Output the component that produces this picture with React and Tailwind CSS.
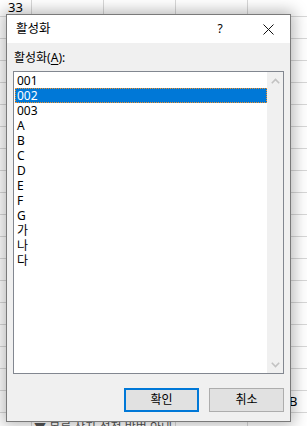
import React from "react";

const items = ["001", "002", "003", "A", "B", "C", "D", "E", "F", "G", "가", "나", "다"];

function Chevron({ up }) {
  return (
    <svg width="9" height="6" viewBox="0 0 9 6">
      <path
        d={up ? "M0.8 5.2 L4.5 1.5 L8.2 5.2" : "M0.8 0.8 L4.5 4.5 L8.2 0.8"}
        fill="none"
        stroke="#c2c2c2"
        strokeWidth="1.6"
      />
    </svg>
  );
}

export default function App() {
  const rows = Array.from({ length: 21 });
  return (
    <div
      className="relative w-[307px] h-[426px] overflow-hidden bg-white text-[12px] text-black"
      style={{ fontFamily: '"Noto Sans", "Noto Sans CJK KR", sans-serif' }}
    >
      {/* spreadsheet background */}
      <div className="-mt-[5px] flex flex-col">
        {rows.map((_, i) => (
          <div key={i} className="flex h-[22px] shrink-0 border-b border-[#d8d8d8]">
            <div className="w-[32px] shrink-0 border-r border-[#d8d8d8] flex items-center justify-center pt-[3px] leading-none text-[13px]">
              {i === 0 ? "33" : ""}
            </div>
            <div className="w-[72px] shrink-0 border-r border-[#d8d8d8]" />
            <div className="w-[72px] shrink-0 border-r border-[#d8d8d8]" />
            <div className="w-[72px] shrink-0 border-r border-[#d8d8d8]" />
            <div className="flex-1 flex items-center pl-[41px] text-[13px] leading-none">
              {i === 18 ? "B" : ""}
            </div>
          </div>
        ))}
      </div>
      <div className="absolute left-[8px] top-[422px] flex items-start gap-[14px] text-[#555] text-[12px] leading-none">
        <span>━</span>
        <span>▼ 목록 상자 설정 방법 안내</span>
      </div>

      {/* dialog */}
      <div className="absolute left-[6px] top-[14px] w-[285px] h-[408px] border border-[#7a7a7a] bg-[#f0f0f0] shadow-[0_0_14px_3px_rgba(0,0,0,0.28)] flex flex-col">
        <div className="h-[28px] bg-white flex items-center shrink-0">
          <span className="pl-[9px] flex-1 leading-none text-[12.5px]">활성화</span>
          <span className="w-[14px] text-center leading-none mr-[35px]">?</span>
          <span className="w-[12px] flex items-center justify-center mr-[16px]">
            <svg width="11" height="11" viewBox="0 0 11 11">
              <path d="M0.5 0.5 L10.5 10.5 M10.5 0.5 L0.5 10.5" stroke="#111" strokeWidth="1" />
            </svg>
          </span>
        </div>
        <div className="flex-1 flex flex-col px-[6px] pt-[7px]">
          <div className="h-[16px] leading-[16px] pl-[1px]">
            활성화(<span className="underline underline-offset-2">A</span>):
          </div>
          <div className="mt-[5px] h-[303px] border border-[#828790] bg-white flex">
            <div className="flex-1 flex flex-col pt-[1px] pl-[1px]">
              {items.map((t) =>
                t === "002" ? (
                  <div
                    key={t}
                    className="h-[15px] leading-[13px] pl-[1px] bg-[#0078d7] text-white border border-dotted border-[#f0902a]"
                  >
                    {t}
                  </div>
                ) : (
                  <div key={t} className="h-[15px] leading-[15px] pl-[2px]">
                    {t}
                  </div>
                )
              )}
            </div>
            <div className="w-[16px] bg-[#f0f0f0] flex flex-col justify-between">
              <div className="h-[17px] flex items-center justify-center">
                <Chevron up />
              </div>
              <div className="h-[17px] flex items-center justify-center">
                <Chevron />
              </div>
            </div>
          </div>
          <div className="mt-[14px] flex justify-end gap-[10px]">
            <div className="w-[75px] h-[24px] border-2 border-[#0078d7] bg-[#e1e1e1] flex items-center justify-center leading-none">
              확인
            </div>
            <div className="w-[75px] h-[24px] border border-[#adadad] bg-[#e1e1e1] flex items-center justify-center leading-none">
              취소
            </div>
          </div>
        </div>
      </div>
    </div>
  );
}
